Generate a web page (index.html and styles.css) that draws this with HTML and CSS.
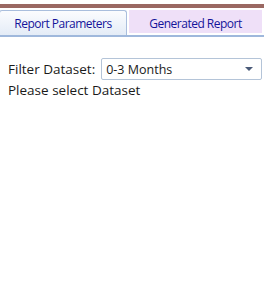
FILE: index.html
```html
<!DOCTYPE html>
<html lang="en">
<head>
  <meta charset="UTF-8" />
  <title>Report</title>
  <link rel="stylesheet" href="styles.css">
</head>
<body>
  <div class="topbar"></div>

  <div class="tabs">
    <div class="tab active">Report Parameters</div>
    <div class="tab">Generated Report</div>
  </div>

  <div class="panel">
    <div class="filter">
      <label for="dataset">Filter Dataset:</label>
      <div class="select" id="dataset">
        <span>0-3 Months</span>
        <svg width="8" height="4" viewBox="0 0 8 4"><path d="M0 0h8L4 4z" fill="#4a5a78"/></svg>
      </div>
    </div>
    <div class="hint">Please select Dataset</div>
  </div>
</body>
</html>
```

FILE: styles.css
```css
body {
  margin: 0;
  background: #fff;
  font-family: 'Open Sans', sans-serif;
  font-size: 13.5px;
  width: 264px;
  height: 296px;
  overflow: hidden;
}

.topbar {
  height: 4px;
  margin-top: 4px;
  background: #9a6862;
}

.tabs {
  display: flex;
  gap: 2px;
  margin-top: 2px;
  padding-right: 2px;
  border-bottom: 2px solid #9fb8dc;
}

.tab {
  flex: 1;
  height: 23px;
  line-height: 27px;
  text-align: center;
  color: #14149a;
  background: #efe0f8;
  font-size: 12px;
  letter-spacing: -0.5px;
}

.tab.active {
  flex: 0 0 126px;
  background: linear-gradient(#fbfcfe, #e4ecf7);
  border: 1px solid #a9bedd;
  border-bottom: none;
  border-radius: 3px 3px 0 0;
  height: 24px;
  line-height: 26px;
  margin-left: -1px;
}

.panel {
  padding: 21px 2px 0 8px;
  color: #1a1a1a;
}

.filter {
  display: flex;
  align-items: center;
  gap: 6px;
}

.select {
  flex: 1;
  height: 20px;
  border: 1px solid #b4c4d8;
  border-radius: 2px;
  display: flex;
  align-items: center;
  justify-content: space-between;
  padding: 0 8px 0 4px;
  color: #1a1a1a;
  font-size: 12.5px;
}

.hint {
  margin-top: 1px;
}
```
